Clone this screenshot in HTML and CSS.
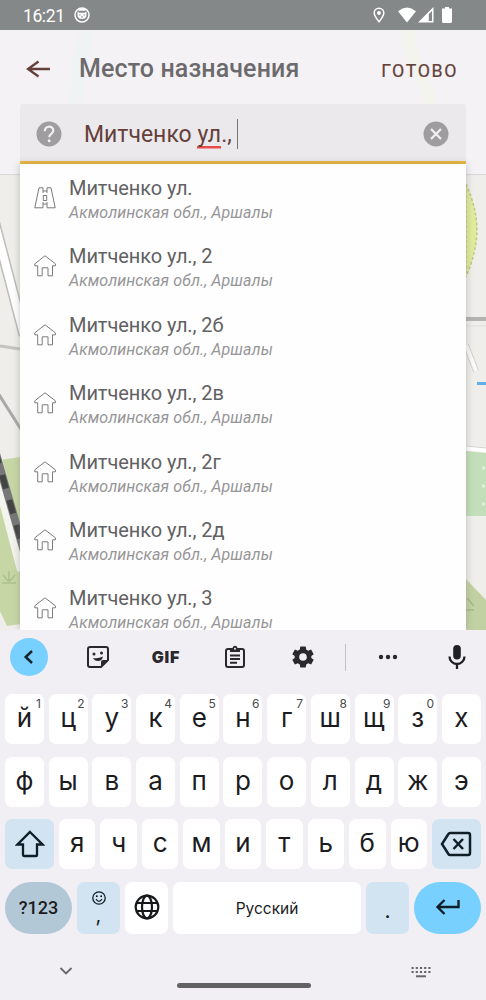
FILE: index.html
```html
<!DOCTYPE html>
<html lang="ru">
<head>
<meta charset="utf-8">
<title>Место назначения</title>
<link rel="stylesheet" href="styles.css">
</head>
<body>
<svg class="defs" width="0" height="0">
  <symbol id="house" viewBox="0 0 22 22"><path d="M11 .8 21.400 8.800V10.800H18.500V20.800H14V12.800H8.200V20.800H3.700V10.800H.8V8.800Z"/></symbol>
</svg>
<div class="screen">
  <svg class="map" width="486" height="630" viewBox="0 0 486 630">
    <rect width="486" height="630" fill="#efeeea"/>
    <path d="M0 460 20 457V624L7 626 0 611Z" fill="#c6d7a5"/>
    <path d="M-6 220 24 335" stroke="#bdbdba" stroke-width="11"/>
    <path d="M-6 220 24 335" stroke="#fff" stroke-width="8"/>
    <path d="M0 346 20 349" stroke="#c4c4c1" stroke-width="3"/>
    <path d="M-2 393 22 431" stroke="#aaa9a7" stroke-width="3"/>
    <path d="M-6 455 24 570" stroke="#f4f4ee" stroke-width="14"/>
    <path d="M-5 450 25 555" stroke="#777" stroke-width="8"/>
    <path d="M-5 450 25 555" stroke="#444" stroke-width="6" stroke-dasharray="14 12"/>
    <path d="M2 583H16M9 582V571M8 581 3 575M10 581 15 575" stroke="#abc18d" stroke-width="1.5"/>
    <path d="M466 184C481 218 480 243 466 277Z" fill="#e0eb9b" stroke="#bdca7f" stroke-width="1.500" stroke-dasharray="3 2"/>
    <path d="M466 319H486" stroke="#b4b3b0" stroke-width="4"/>
    <path d="M466 326H486" stroke="#dededb"/>
    <path d="M466 345 476 371" stroke="#cfcfcc" stroke-width="6"/><path d="M466 345 476 371" stroke="#fafaf8" stroke-width="4"/>
    <path d="M477 383.500H486" stroke="#61aee9" stroke-width="3"/>
    <path d="M466 448 486 450" stroke="#fff" stroke-width="5"/><path d="M466 446 486 448" stroke="#d2d1ce"/>
    <path d="M466 451 486 453V516H466Z" fill="#c3dfb9"/>
    <path d="M482 468h3M482 486h3M482 504h3" stroke="#e0f0d6" stroke-width="3"/>
    <path d="M466 579 486 600V630H466Z" fill="#c1d1a2"/>
    <path d="M466 610H474M467 598 474 606" stroke="#a7b98c" stroke-width="1.500"/>
  </svg>

  <header class="statusbar">
    <span class="clock">16:21</span>
    <svg class="catmark" width="16" height="16" viewBox="0 0 16 16"><circle cx="8" cy="8" r="7" fill="none" stroke="#fff" stroke-width="1.500"/><path d="M3.500 4.500 5.500 5.700H10.500L12.500 4.500V9.500Q11 12 8 12T3.500 9.500Z" fill="#fff"/><path d="M3.500 3Q8 .5 12.500 3L11 3.800H5Z" fill="#fff"/><path d="M5.200 8h1.300M9.500 8H10.800M7 10h2" stroke="#848888"/></svg>
    <span class="spacer"></span>
    <svg width="12" height="16" viewBox="0 0 12 16"><path d="M6 14.800C3.600 11.800 1.200 8.600 1.200 6A4.800 4.800 0 0 1 10.800 6C10.800 8.600 8.400 11.800 6 14.800Z" fill="none" stroke="#fff" stroke-width="1.500"/><circle cx="6" cy="6" r="1.900" fill="#fff"/></svg>
    <svg class="wifi" width="20" height="16" viewBox="0 0 20 16"><path d="M1 4.200Q10-3 19 4.200L10 15.500Z" fill="#fff"/></svg>
    <svg class="signal" width="16" height="16" viewBox="0 0 16 16"><path d="M0 15.500 15.500 0V15.500Z" fill="#fff"/><path d="M10.800 14V7L14 4V14Z" fill="#848888"/></svg>
    <svg class="battery" width="10" height="16" viewBox="0 0 10 16"><path d="M3 0H7V1.500H10V14.500Q10 16 8.500 16H1.500Q0 16 0 14.500V1.500H3Z" fill="#fff"/></svg>
  </header>

  <section class="panel">
    <svg class="panel-map" width="486" height="144" viewBox="0 30 486 144"><path d="M87 30 79 65 76 104" stroke="#eff3f4" stroke-width="14" fill="none"/><path d="M409 30Q411 60 420 75T430 104" stroke="#f4f4ee" stroke-width="13" fill="none"/></svg>
    <div class="titlebar">
      <svg width="26" height="18" viewBox="0 0 26 18"><path d="M24 9H2.500M12.500 1.500 2 9 12.500 16.500" fill="none" stroke="#65403b" stroke-width="2.300"/></svg>
      <h1 class="title">Место назначения</h1>
      <span class="done">ГОТОВО</span>
    </div>
    <div class="field">
      <svg width="26" height="26" viewBox="0 0 26 26"><circle cx="13" cy="13" r="12.500" fill="#9f9d9f"/><path d="M8.800 10.200C8.800 4 17.500 4.200 17.300 9.800 17.200 12.800 13.200 13 13.200 16.200" fill="none" stroke="#f1eff1" stroke-width="2.200"/><circle cx="13.200" cy="19.800" r="1.500" fill="#f1eff1"/></svg>
      <span class="query">Митченко <span class="typo">ул</span>.,</span><span class="caret"></span>
      <svg class="clear" width="26" height="26" viewBox="0 0 26 26"><circle cx="13" cy="13" r="12.500" fill="#9f9d9f"/><path d="M8 8 18 18M18 8 8 18" stroke="#f1eff1" stroke-width="2.300"/></svg>
    </div>
  </section>

  <ul class="results">
    <li class="result"><svg class="place" viewBox="0 0 22 22"><path d="M5 .8H9V4H13V.8H17L21.200 20.800H13V17H9V20.800H.8ZM9.300 8.500H12.700V13.500H9.300ZM9 4V6M13 4V6M9 15V17M13 15V17"/></svg><div><div class="street">Митченко ул.</div><div class="region">Акмолинская обл., Аршалы</div></div></li>
    <li class="result"><svg class="place"><use href="#house"/></svg><div><div class="street">Митченко ул., 2</div><div class="region">Акмолинская обл., Аршалы</div></div></li>
    <li class="result"><svg class="place"><use href="#house"/></svg><div><div class="street">Митченко ул., 2б</div><div class="region">Акмолинская обл., Аршалы</div></div></li>
    <li class="result"><svg class="place"><use href="#house"/></svg><div><div class="street">Митченко ул., 2в</div><div class="region">Акмолинская обл., Аршалы</div></div></li>
    <li class="result"><svg class="place"><use href="#house"/></svg><div><div class="street">Митченко ул., 2г</div><div class="region">Акмолинская обл., Аршалы</div></div></li>
    <li class="result"><svg class="place"><use href="#house"/></svg><div><div class="street">Митченко ул., 2д</div><div class="region">Акмолинская обл., Аршалы</div></div></li>
    <li class="result"><svg class="place"><use href="#house"/></svg><div><div class="street">Митченко ул., 3</div><div class="region">Акмолинская обл., Аршалы</div></div></li>
  </ul>

  <section class="keyboard">
    <div class="tools">
      <span class="back"><svg width="38" height="38" viewBox="0 0 38 38"><path d="M22 13 15.700 19 22 25" fill="none" stroke="#17242d" stroke-width="2.500"/></svg></span>
      <svg class="tool" width="24" height="24" viewBox="0 0 24 24"><path d="M4 2H20Q22 2 22 4V15L15 22H4Q2 22 2 20V4Q2 2 4 2Z" fill="none" stroke="#29282c" stroke-width="2"/><path d="M22 15H17Q15 15 15 17V22Z" fill="#29282c"/><circle cx="8" cy="9" r="1.500" fill="#29282c"/><circle cx="15.500" cy="8" r="1.500" fill="#29282c"/><path d="M7 13Q12 14 17 11.500 16 16 12 16 8.500 16 7 13Z" fill="#29282c"/></svg>
      <span class="gif">GIF</span>
      <svg class="tool" width="24" height="24" viewBox="0 0 24 24"><path d="M5 4H19Q21 4 21 6V20Q21 22 19 22H5Q3 22 3 20V6Q3 4 5 4Z" fill="none" stroke="#29282c" stroke-width="2"/><path d="M7 3H9.500Q10 .8 12 .8T14.500 3H17V7H7Z" fill="#29282c"/><circle cx="12" cy="3.700" r="1" fill="#f1eff4"/><path d="M7 10.500H17M7 14H17M7 17.700H14" stroke="#29282c" stroke-width="1.900"/></svg>
      <svg class="tool" width="24" height="24" viewBox="0 0 24 24"><path fill="#29282c" fill-rule="evenodd" d="M9.300 1.500H14.700L15.200 4.600 17.200 5.700 20.100 4.600 22.700 9.200 20.300 11.100V12.900L22.700 14.800 20.100 19.400 17.200 18.300 15.200 19.400 14.700 22.500H9.300L8.800 19.400 6.800 18.300 3.900 19.400 1.300 14.800 3.700 12.900V11.100L1.300 9.200 3.900 4.600 6.800 5.700 8.800 4.600ZM12 8.200A3.800 3.800 0 1 0 12 15.800 3.800 3.800 0 1 0 12 8.200Z"/></svg>
      <span class="divider"></span>
      <svg class="tool" width="24" height="24" viewBox="0 0 24 24"><g fill="#29282c"><circle cx="5" cy="12" r="2.200"/><circle cx="12" cy="12" r="2.200"/><circle cx="19" cy="12" r="2.200"/></g></svg>
      <svg class="mic" width="24" height="26" viewBox="0 0 24 26"><rect x="8.200" y="1" width="7.600" height="14.500" rx="3.800" fill="#202125"/><path d="M4.500 12.500A7.500 7.500 0 0 0 19.500 12.500M12 20V25" stroke="#202125" stroke-width="2.300" fill="none"/></svg>
    </div>

    <div class="row letters">
      <span class="key">й<sup>1</sup></span><span class="key">ц<sup>2</sup></span><span class="key">у<sup>3</sup></span><span class="key">к<sup>4</sup></span><span class="key">е<sup>5</sup></span><span class="key">н<sup>6</sup></span><span class="key">г<sup>7</sup></span><span class="key">ш<sup>8</sup></span><span class="key">щ<sup>9</sup></span><span class="key">з<sup>0</sup></span><span class="key">х</span>
    </div>
    <div class="row letters">
      <span class="key">ф</span><span class="key">ы</span><span class="key">в</span><span class="key">а</span><span class="key">п</span><span class="key">р</span><span class="key">о</span><span class="key">л</span><span class="key">д</span><span class="key">ж</span><span class="key">э</span>
    </div>
    <div class="row third">
      <span class="key soft"><svg width="30" height="28" viewBox="0 0 30 28"><path d="M15 2 27.500 14.500H22V25.200Q22 26 21 26H9Q8 26 8 25V14.500H2.500Z" fill="none" stroke="#101e27" stroke-width="2.300"/></svg></span>
      <span class="key">я</span><span class="key">ч</span><span class="key">с</span><span class="key">м</span><span class="key">и</span><span class="key">т</span><span class="key">ь</span><span class="key">б</span><span class="key">ю</span>
      <span class="key soft"><svg width="32" height="26" viewBox="0 0 32 26"><path d="M10 2H28Q30 2 30 4V22Q30 24 28 24H10Q9 24 8.400 23L2 13 8.400 3Q9 2 10 2ZM13.500 8 23 18M23 8 13.500 18" fill="none" stroke="#101e27" stroke-width="2.500"/></svg></span>
    </div>
    <div class="row fourth">
      <span class="key symbols">?123</span>
      <span class="key soft emoji"><svg width="14" height="14" viewBox="0 0 14 14"><circle cx="7" cy="7" r="6.200" fill="none" stroke="#101e27" stroke-width="1.300"/><path d="M4 8.200Q7 12.500 10 8.200" fill="none" stroke="#101e27" stroke-width="1.200"/><circle cx="4.800" cy="5.200" r=".9"/><circle cx="9.200" cy="5.200" r=".9"/></svg><span class="comma">,</span></span>
      <span class="key"><svg width="26" height="26" viewBox="0 0 26 26"><g fill="none" stroke="#17181a" stroke-width="2.200"><circle cx="13" cy="13" r="11.300"/><ellipse cx="13" cy="13" rx="5" ry="11.300"/><path d="M2.500 9H23.500M2.500 17H23.500"/></g></svg></span>
      <span class="key space">Русский</span>
      <span class="key soft dot">.</span>
      <span class="key enter"><svg width="26" height="18" viewBox="0 0 26 18"><path d="M23.500 2V9H3M9.500 2 2.500 9 9.500 16" fill="none" stroke="#101e27" stroke-width="2.400"/></svg></span>
    </div>

    <footer class="nav">
      <svg width="14" height="10" viewBox="0 0 14 10"><path d="M1.500 2 7 7.500 12.500 2" fill="none" stroke="#68666b" stroke-width="1.800"/></svg>
      <span class="pill"></span>
      <svg width="20" height="12" viewBox="0 0 20 12"><path d="M.5 2H20M.5 6H20" stroke="#68666b" stroke-width="2.200" stroke-dasharray="2.200 2"/><path d="M5 10.300H15" stroke="#68666b" stroke-width="2"/></svg>
    </footer>
  </section>
</div>
</body>
</html>
```

FILE: styles.css
```css
* { box-sizing: border-box; }
body { margin: 0; font-family: Roboto, "Noto Sans", sans-serif; }
svg { display: block; flex: none; }
.defs { position: absolute; }
.screen { position: relative; width: 486px; height: 1000px; overflow: hidden; display: flex; flex-direction: column; }
.map { position: absolute; left: 0; top: 0; }

.statusbar { position: relative; flex: none; height: 30px; background: #848888; color: #fff; display: flex; align-items: center; padding: 0 34px 0 23px; }
.clock { font-size: 17.500px; letter-spacing: -.4px; line-height: 30px; padding-top: 1px; }
.catmark { margin-left: 9px; }
.spacer { flex: 1; }
.wifi { margin-left: 12px; }
.signal { margin-left: 1px; }
.battery { margin-left: 8px; }

.panel { position: relative; flex: none; height: 134px; background: #f4f2f5; box-shadow: 0 10px 0 #f4f2f5, 0 11px 1px #dad9d9; display: flex; flex-direction: column; }
.panel-map { position: absolute; left: 0; top: 0; }
.titlebar { position: relative; height: 74px; padding: 4px 30px 0 26px; display: flex; align-items: center; }
.title { margin: 0 0 0 27px; font-size: 25px; font-weight: 500; line-height: 30px; letter-spacing: .12px; color: #6c6a6c; white-space: nowrap; }
.done { margin-left: auto; margin-right: -2px; font-size: 18px; letter-spacing: 1.6px; padding-top: 3px; -webkit-text-stroke: .2px; color: #65403b; font-size: 17.800px; }
.field { position: relative; margin: 0 20px; height: 60px; background: #ebe9ec; border-bottom: 3px solid #eeb93b; border-radius: 3px 3px 0 0; display: flex; align-items: center; padding: 2px 17px 0 16px; }
.query { margin-left: 22px; margin-top: 2px; font-size: 23px; line-height: 30px; color: #65403b; white-space: nowrap; }
.typo { background: linear-gradient(#e94b4b, #e94b4b) 0 96% / 100% 2.5px no-repeat; display: inline-block; }
.caret { width: 1px; height: 30px; margin-left: 5px; background: #777; }
.clear { margin-left: auto; }

.results { position: relative; flex: none; width: 446px; height: 466px; margin: 0 20px; padding: 12px 0 0; list-style: none; background: #fefefe; overflow: hidden; box-shadow: 0 0 7px #77777770; }
.result { height: 68.4px; display: flex; gap: 13px; padding-left: 14px; }
.place { width: 22px; height: 22px; margin-top: 11px; fill: none; stroke: #7a7a7c; stroke-width: 1; overflow: visible; }
.street { font-size: 20px; line-height: 24px; letter-spacing: -.08px; color: #626164; white-space: nowrap; }
.region { font-size: 16px; line-height: 25px; letter-spacing: .1px; font-style: italic; color: #969597; white-space: nowrap; }

.keyboard { position: relative; flex: 1; background: #f1eff4; padding: 0 5px; display: flex; flex-direction: column; }
.tools { height: 54px; display: grid; grid-template-columns: 47px 91px 46px 91px 46px 39px 46px 1fr; align-items: center; justify-items: center; }
.back { width: 38px; height: 38px; border-radius: 50%; background: #77d0ff; }
.gif { font: 900 16px Inter, sans-serif; letter-spacing: .8px; color: #29282c; }
.mic { justify-self: end; margin-right: 12px; }
.divider { width: 1px; height: 27px; background: #c2c0c5; }
.row { height: 50px; display: grid; grid-template-rows: 50px; margin-bottom: 12.5px; }
.letters { grid-template-columns: repeat(11, 39px); justify-content: space-between; }
.tools + .row { margin-top: 10px; }
.third { grid-template-columns: 49px repeat(9, 36.4px) 49px; justify-content: space-between; }
.fourth { height: 52px; grid-template-rows: 52px; grid-template-columns: 67px 43px 43px 188px 43px 67px; justify-content: space-between; margin-bottom: 0; }
.key { position: relative; background: #fff; border-radius: 7px; color: #1c1c1f; font: 26px/46px Inter, "Noto Sans", sans-serif; padding-bottom: 2px; display: flex; align-items: center; justify-content: center; }
.key sup { position: absolute; right: 3px; top: 2px; font-size: 12px; line-height: 16px; color: #4b4a4e; }
.soft { background: #d2e4f1; color: #101e27; padding-bottom: 0; }
.key.symbols { background: #b3c8d7; border-radius: 26px; font: 500 18px/50px Roboto, sans-serif; padding-bottom: 0; }
.key.emoji { flex-direction: column; justify-content: flex-start; padding-top: 9px; }
.comma { font-size: 20px; line-height: 20px; }
.key.space { font: 15.5px/50px Inter, sans-serif; padding: 2px 0 0; }
.key.dot { line-height: 50px; padding-top: 7px; font-size: 21px; }
.enter { background: #77d0ff; border-radius: 26px; }
.nav { flex: 1; display: grid; grid-template-columns: 121px 1fr 120px; justify-items: center; padding-top: 32px; }
.pill { width: 134px; height: 5px; border-radius: 3px; background: #626164; margin-top: 17px; }
```
